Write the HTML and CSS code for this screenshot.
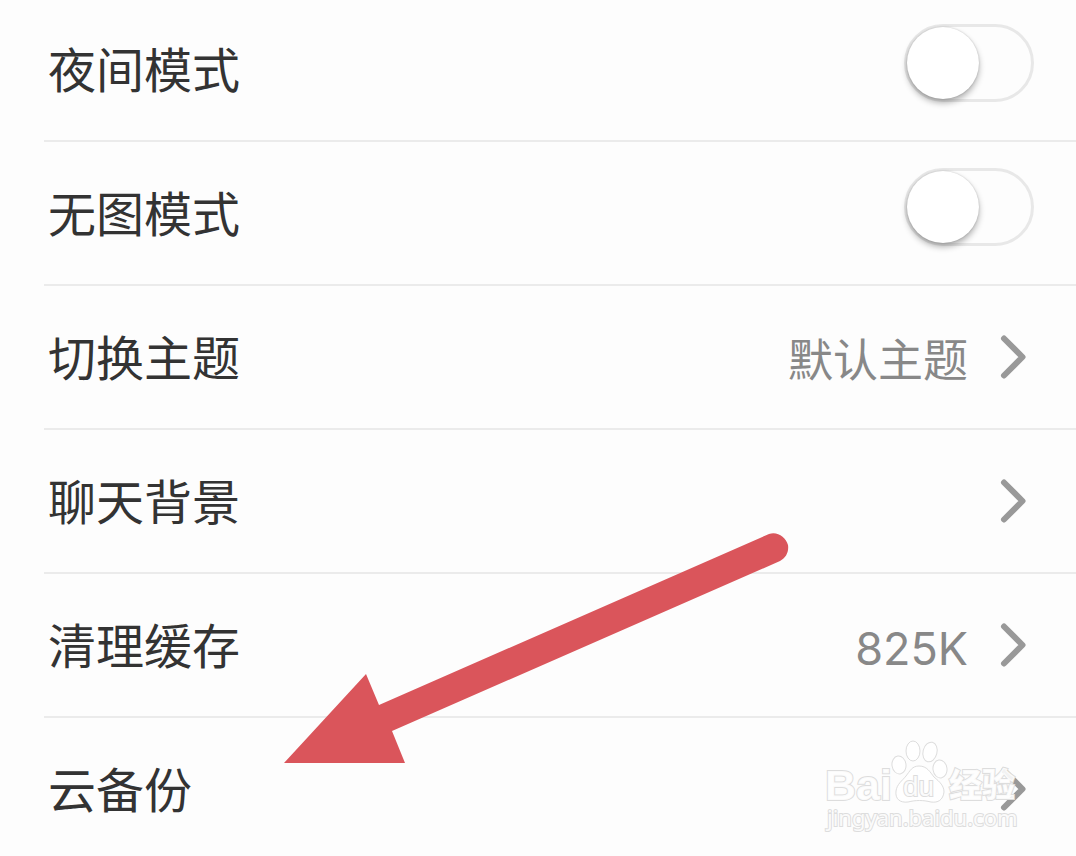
FILE: index.html
```html
<!DOCTYPE html>
<html lang="zh-CN">
<head>
<meta charset="utf-8">
<meta name="viewport" content="width=device-width, initial-scale=1">
<title>设置</title>
<link rel="stylesheet" href="styles.css">
</head>
<body>
<main class="settings">
  <div class="row">
    <label class="row-label" for="night">夜间模式</label>
    <input class="switch" type="checkbox" id="night">
  </div>
  <div class="row">
    <label class="row-label" for="noimage">无图模式</label>
    <input class="switch" type="checkbox" id="noimage">
  </div>
  <button class="row" type="button">
    <span class="row-label">切换主题</span>
    <span class="row-value">默认主题</span>
    <svg class="chevron" viewBox="0 0 28 46" aria-hidden="true"><path d="M4 4.500L22.500 23L4 41.500"/></svg>
  </button>
  <button class="row" type="button">
    <span class="row-label">聊天背景</span>
    <svg class="chevron" viewBox="0 0 28 46" aria-hidden="true"><path d="M4 4.500L22.500 23L4 41.500"/></svg>
  </button>
  <button class="row" type="button">
    <span class="row-label">清理缓存</span>
    <span class="row-value">825K</span>
    <svg class="chevron" viewBox="0 0 28 46" aria-hidden="true"><path d="M4 4.500L22.500 23L4 41.500"/></svg>
  </button>
  <button class="row row-last" type="button">
    <span class="row-label">云备份</span>
    <svg class="chevron" viewBox="0 0 28 46" aria-hidden="true"><path d="M4 4.500L22.500 23L4 41.500"/></svg>
  </button>

  <svg class="pointer" viewBox="0 0 506 232" aria-hidden="true">
    <path d="M0 230L82 141L95 172L485 1C493 -2 502 4 504 12C505 19 502 25 496 28L108 198L121 230Z"/>
  </svg>

  <svg class="watermark" viewBox="0 0 204 100" role="img" aria-label="Baidu经验 jingyan.baidu.com">
    <text class="wm-brand" x="3" y="64">Bai</text>
    <g class="wm-paw">
      <ellipse cx="77" cy="29" rx="7" ry="9" transform="rotate(-8 77 29)"/>
      <ellipse cx="91" cy="15" rx="7" ry="10"/>
      <ellipse cx="108" cy="16" rx="7" ry="10" transform="rotate(14 108 16)"/>
      <ellipse cx="118" cy="33" rx="7" ry="9" transform="rotate(-8 118 33)"/>
      <path d="M97 30C105 30 108 36 112 41C118 46 122 50 122 56C121 64 116 67 109 66C101 64 94 64 86 66C78 67 73 63 74 55C75 48 80 45 84 40C88 35 90 30 97 30Z"/>
    </g>
    <text class="wm-du" x="81" y="60">du</text>
    <text class="wm-cn" x="127" y="61">经验</text>
    <text class="wm-url" x="5" y="90">jingyan.baidu.com</text>
  </svg>
</main>
</body>
</html>
```
FILE: styles.css
```css
* {
  box-sizing: border-box;
}

body {
  margin: 0;
  background: #fdfdfd;
  color: #333;
  font-family: Inter, "Noto Sans CJK SC", sans-serif;
}

.settings {
  position: relative;
  display: flex;
  flex-direction: column;
  margin-top: -2px;
  padding-left: 44px;
  overflow: hidden;
}

.row {
  display: flex;
  align-items: center;
  width: 100%;
  min-height: 144px;
  margin: 0;
  padding: 0 48px 0 4px;
  border: 0;
  border-bottom: 2px solid #ebebeb;
  background: none;
  color: inherit;
  font: inherit;
  text-align: left;
}

.row-last {
  border-bottom-color: transparent;
}

.row-label {
  flex: 1;
  padding-top: 4px;
  font-size: 48px;
  line-height: 72px;
}

.row-value {
  margin-right: 32px;
  padding-top: 8px;
  color: #888;
  font-size: 45px;
  line-height: 68px;
}

.chevron {
  flex: none;
  width: 28px;
  height: 46px;
  fill: none;
  stroke: #999;
  stroke-width: 6;
  stroke-linecap: round;
  stroke-linejoin: round;
}

.switch {
  appearance: none;
  flex: none;
  width: 130px;
  height: 78px;
  margin: 0 -6px 12px 0;
  border: 3px solid #e8e8e8;
  border-radius: 39px;
  background: #fdfdfd;
}

.switch::before {
  content: "";
  display: block;
  width: 72px;
  height: 72px;
  border-radius: 50%;
  background: #fff;
  box-shadow: 0 4px 6px rgba(0, 0, 0, 0.3), 0 0 2px rgba(0, 0, 0, 0.2);
}

.switch:checked::before {
  margin-left: auto;
}

.pointer {
  position: absolute;
  top: 535px;
  left: 284px;
  width: 506px;
  height: 232px;
  fill: #da555b;
  pointer-events: none;
}

.watermark {
  position: absolute;
  top: 738px;
  right: 50px;
  width: 204px;
  height: 100px;
  fill: #fff;
  fill-opacity: 0.9;
  stroke: #ddd;
  stroke-width: 1;
  pointer-events: none;
}

.watermark text {
  paint-order: stroke;
  stroke-width: 2;
}

.wm-brand {
  font: bold 43px "Liberation Sans", sans-serif;
}

.wm-du {
  font: 28px "Liberation Sans", sans-serif;
}

.wm-cn {
  font: 900 33px "Noto Sans CJK SC", sans-serif;
}

.wm-url {
  font: 22px "Noto Sans", sans-serif;
}
```
